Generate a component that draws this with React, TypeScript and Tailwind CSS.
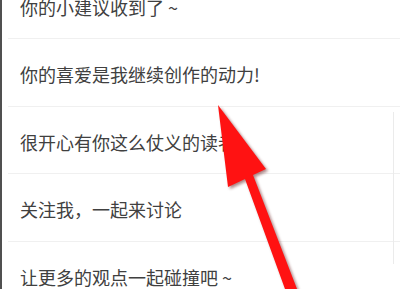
import React from 'react'

const items = [
  '你的小建议收到了 ~',
  '你的喜爱是我继续创作的动力!',
  '很开心有你这么仗义的读者~',
  '关注我，一起来讨论',
  '让更多的观点一起碰撞吧 ~',
]

const Arrow: React.FC = () => (
  <svg className="absolute inset-0 pointer-events-none" width="400" height="289" viewBox="0 0 400 289">
    <defs>
      <filter id="soft" x="-20%" y="-20%" width="140%" height="140%">
        <feGaussianBlur stdDeviation="1.6" />
      </filter>
    </defs>
    {/* shadow */}
    <polygon
      points="218,107 266,171 253,177 297,291 285,291 245,181 228,189"
      fill="#5a1010"
      opacity="0.5"
      filter="url(#soft)"
    />
    <polygon
      points="216,105 264,169 251,175 295,289 283,289 243,179 226,187"
      fill="#ff1212"
    />
  </svg>
)

export default function App() {
  return (
    <div className="relative w-[400px] h-[289px] overflow-hidden bg-white border-l-2 border-[#505050] font-['Noto_Sans_CJK_SC','Noto_Sans',sans-serif]">
      <div className="-mt-[28.5px]">
        {items.map((text, i) => (
          <div key={i} className="ml-[6px] h-[67.5px] border-b border-[#f0f0f0] flex items-center pt-[4px] pl-[12px]">
            <span className="text-[18px] leading-none text-[#404040]">{text}</span>
          </div>
        ))}
      </div>
      {/* faint edge on the right */}
      <div className="absolute right-[6px] top-[112px] h-[152px] w-px bg-[#ebebeb]" />
      <Arrow />
    </div>
  )
}
